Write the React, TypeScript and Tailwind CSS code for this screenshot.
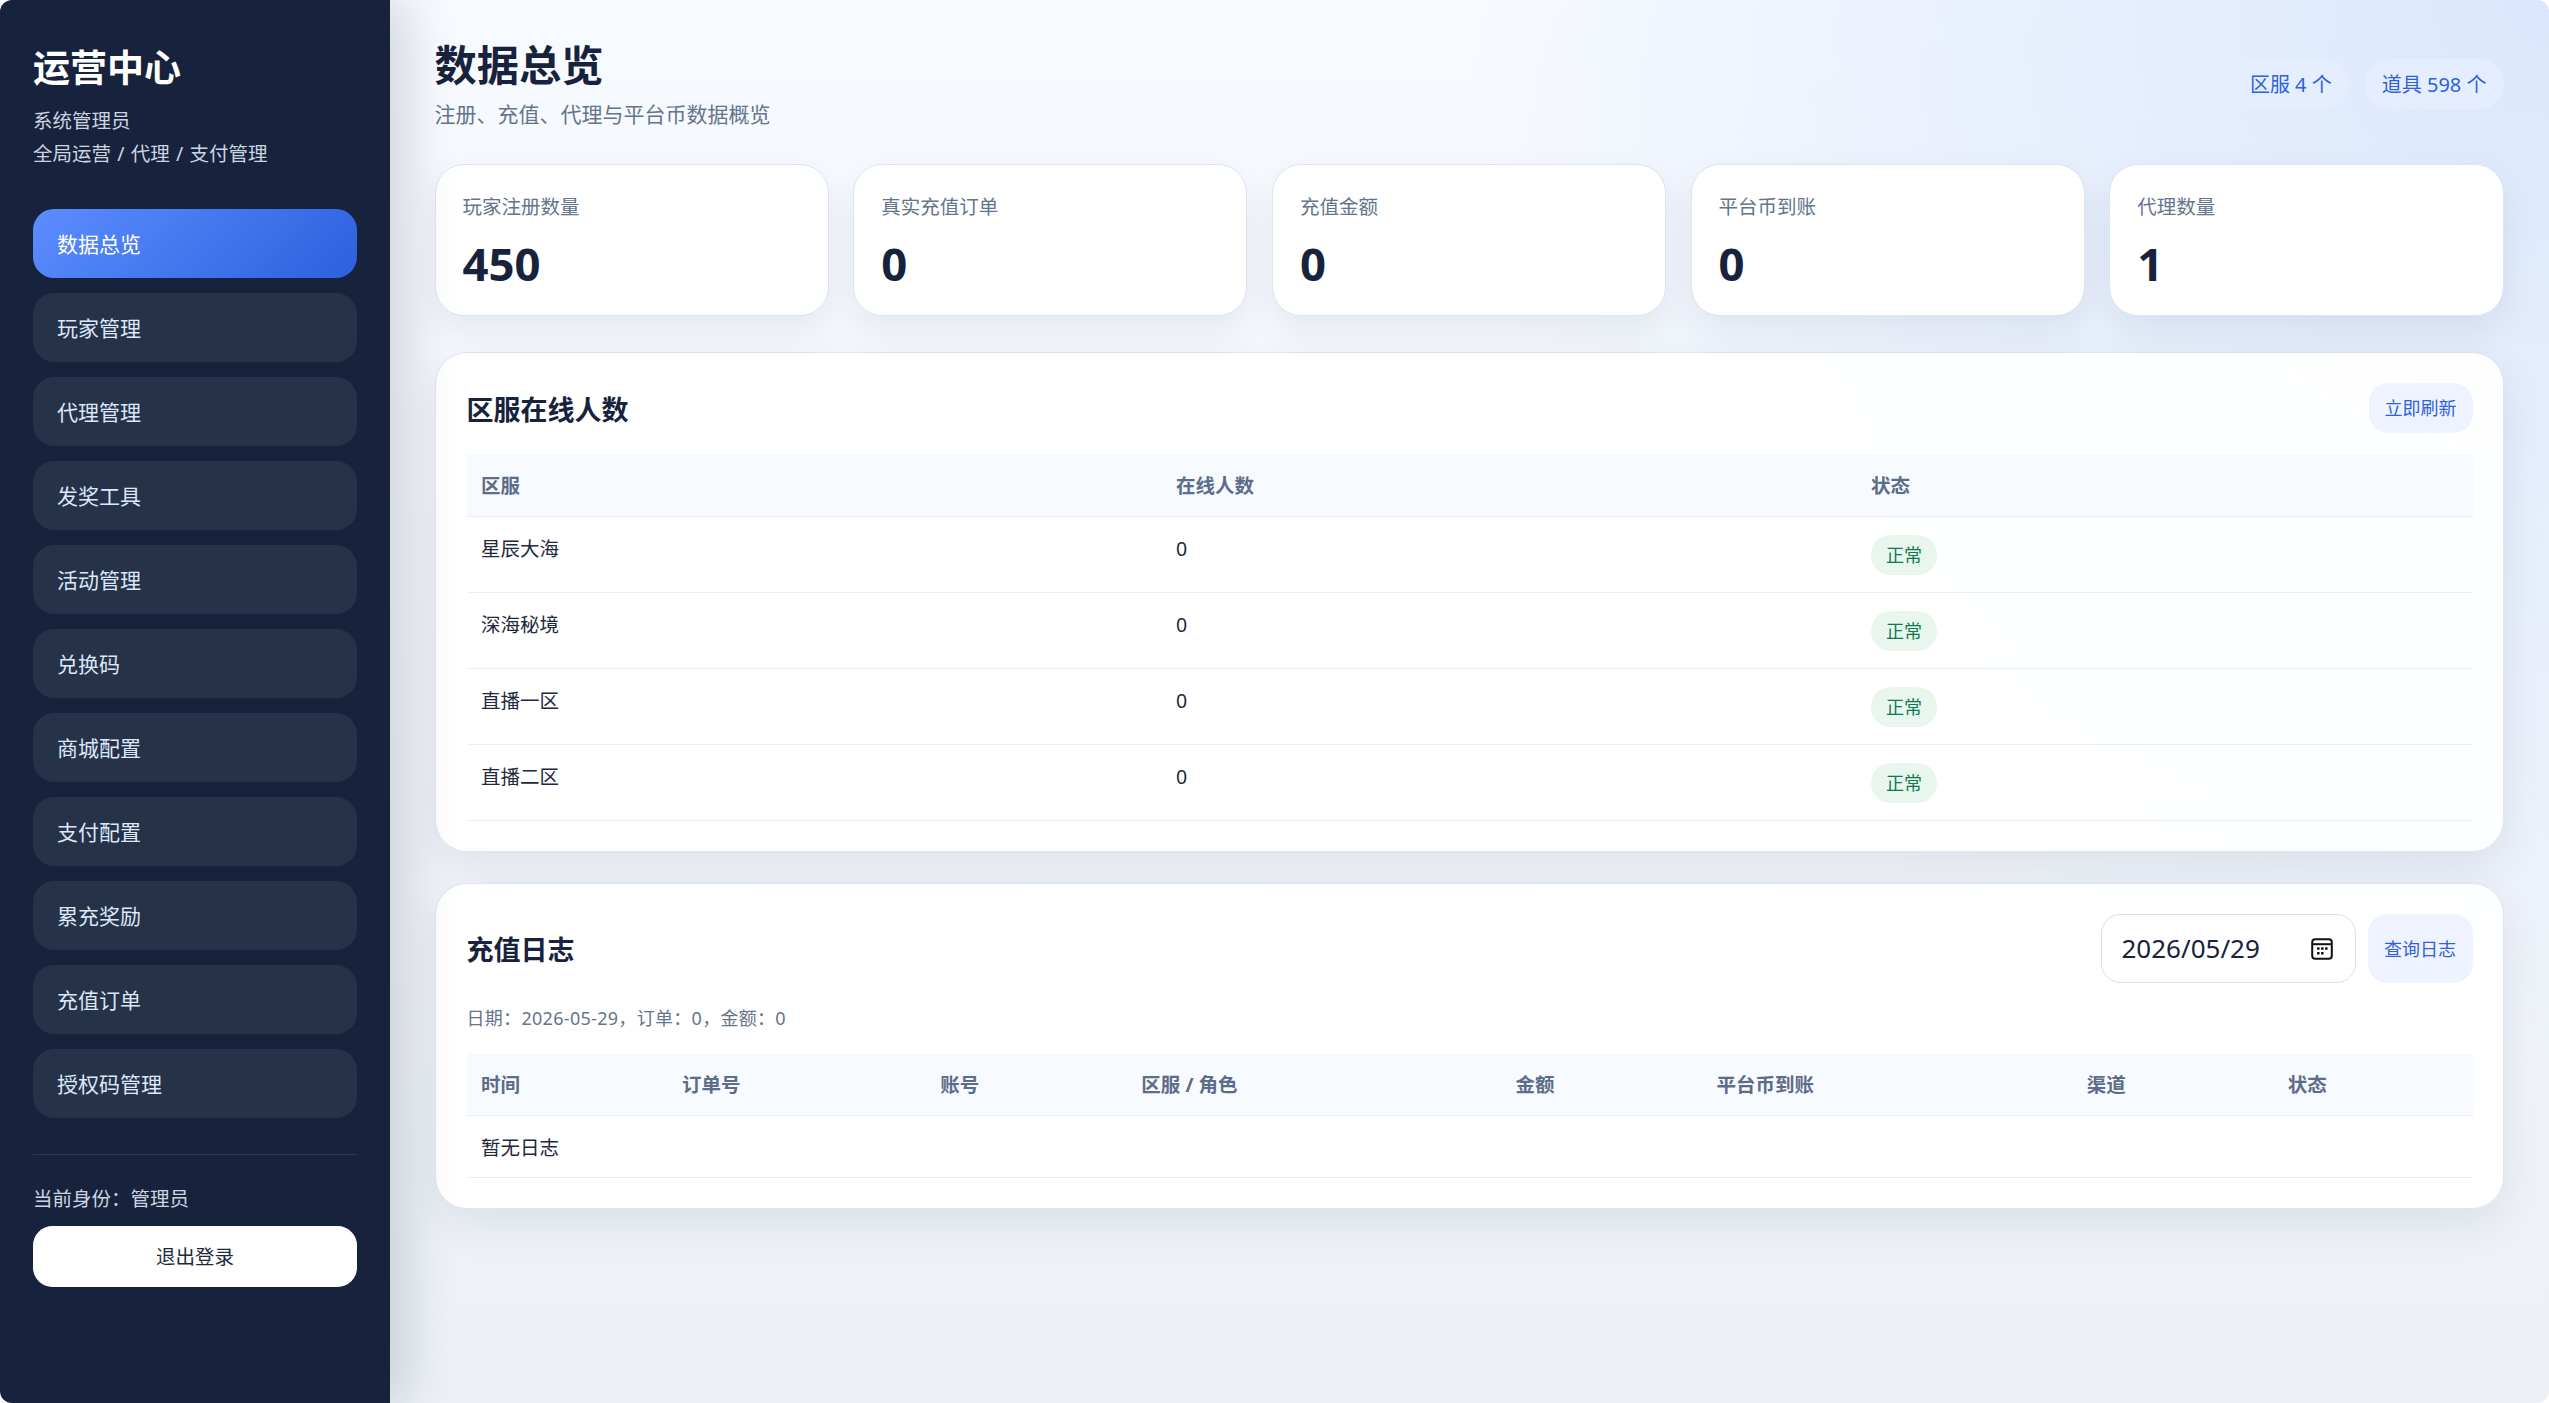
const navItems = ["数据总览", "玩家管理", "代理管理", "发奖工具", "活动管理", "兑换码", "商城配置", "支付配置", "累充奖励", "充值订单", "授权码管理"];

const stats = [
  { label: "玩家注册数量", value: "450" },
  { label: "真实充值订单", value: "0" },
  { label: "充值金额", value: "0" },
  { label: "平台币到账", value: "0" },
  { label: "代理数量", value: "1" },
];

const servers = ["星辰大海", "深海秘境", "直播一区", "直播二区"];

const logColumns = [
  { title: "时间", width: "w-[201px]" },
  { title: "订单号", width: "w-[258px]" },
  { title: "账号", width: "w-[201px]" },
  { title: "区服 / 角色", width: "w-[374px]" },
  { title: "金额", width: "w-[201px]" },
  { title: "平台币到账", width: "w-[370px]" },
  { title: "渠道", width: "w-[201px]" },
  { title: "状态", width: "w-[199px]" },
];

const panelClass =
  "rounded-[32px] border border-[#dbe5f3] bg-white/95 pt-[30px] pr-[30px] pb-[30px] pl-[31px] shadow-[0_16px_44px_rgba(15,23,42,0.08)]";
const thClass = "h-[63px] border-b border-[#e8eef8] bg-[#f7faff] px-[14.5px] pt-[2px] text-left text-[19.5px] font-bold text-[#5d6c88]";
const actionClass = "rounded-[19.5px] bg-[#eef3ff] text-[18px] text-[#2f5fde]";

const CalendarIcon = () => (
  <svg width="22" height="22" viewBox="0 0 22 22" fill="none" className="shrink-0">
    <rect x="1.2" y="1.2" width="19.6" height="19.6" rx="3" stroke="#111" strokeWidth="2" />
    <path d="M1.5 6.2h19" stroke="#111" strokeWidth="2" />
    <g fill="#111">
      <rect x="6" y="9.2" width="2.6" height="2.6" rx="0.6" />
      <rect x="10" y="9.2" width="2.6" height="2.6" rx="0.6" />
      <rect x="14" y="9.2" width="2.6" height="2.6" rx="0.6" />
      <rect x="6" y="14" width="2.6" height="2.6" rx="0.6" />
      <rect x="10" y="14" width="2.6" height="2.6" rx="0.6" />
    </g>
  </svg>
);

export default function App() {
  return (
    <div className="bg-white font-['Noto_Sans','Noto_Sans_CJK_SC',sans-serif]">
      <div className="flex h-[1403px] overflow-hidden rounded-[12px]">
        {/* Sidebar */}
        <aside className="relative z-10 flex w-[390px] shrink-0 flex-col bg-[#17233c] px-[33px] pt-[47px] shadow-[16px_0_48px_rgba(15,23,42,0.16)]">
          <h1 className="text-[37px] leading-[42px] font-bold text-white">运营中心</h1>
          <p className="mt-[15px] text-[19.5px] leading-[33px] [word-spacing:1.2px] text-[#cbd5e1]">
            系统管理员
            <br />
            全局运营 / 代理 / 支付管理
          </p>
          <nav className="mt-[39px] flex flex-col gap-[15.5px]">
            {navItems.map((item, i) => (
              <div
                key={item}
                className={
                  i === 0
                    ? "flex h-[68.5px] items-center rounded-[21px] bg-[linear-gradient(135deg,#5c8dff,#2c60de)] px-[24px] pt-[2px] text-[21px] text-white"
                    : "flex h-[68.5px] items-center rounded-[21px] bg-[#263247] px-[24px] pt-[2px] text-[21px] text-[#dbe7fb]"
                }
              >
                {item}
              </div>
            ))}
          </nav>
          <div className="mt-[36px] border-t border-white/10 pt-[27.5px]">
            <p className="text-[19.5px] leading-[33px] text-[#cbd5e1]">当前身份：管理员</p>
            <button className="mt-[10.5px] h-[61px] w-full rounded-[19.5px] bg-white pt-[2px] text-[19.5px] text-[#1e293b]">退出登录</button>
          </div>
        </aside>

        {/* Main */}
        <main className="flex-1 bg-[radial-gradient(circle_at_top_right,#dae7fc,transparent_42%),linear-gradient(180deg,#f7faff,#edf1f7)] pt-[35px] pr-[45.5px] pl-[44.5px]">
          <header className="flex h-[98px] items-center justify-between">
            <div className="h-[98px]">
              <h2 className="text-[42.25px] leading-[60px] font-bold text-[#17233c]">数据总览</h2>
              <p className="mt-[3px] text-[21px] leading-[33px] text-[#64748b]">注册、充值、代理与平台币数据概览</p>
            </div>
            <div className="flex gap-[16px]">
              <span className="flex h-[50px] items-center rounded-full bg-[#e5eeff] px-[17px] pt-[2px] text-[20px] text-[#2f5fde]">区服 4 个</span>
              <span className="flex h-[50px] items-center rounded-full bg-[#e5eeff] px-[17px] pt-[2px] text-[20px] text-[#2f5fde]">道具 598 个</span>
            </div>
          </header>

          <section className="mt-[30.5px] grid grid-cols-5 gap-[24.5px]">
            {stats.map((s) => (
              <div key={s.label} className="h-[152px] rounded-[29px] border border-[#dbe5f3] bg-white px-[27px] pt-[27px] shadow-[0_14px_36px_rgba(15,23,42,0.07)]">
                <div className="text-[19.5px] leading-[30px] text-[#64748b]">{s.label}</div>
                <div className="mt-[13.5px] text-[45.5px] leading-[56px] font-bold text-[#17233c]">{s.value}</div>
              </div>
            ))}
          </section>

          <section className={`mt-[36px] ${panelClass}`}>
            <div className="flex items-center justify-between">
              <h3 className="pt-[5px] text-[27px] font-bold text-[#17233c]">区服在线人数</h3>
              <button className={`h-[50px] w-[104px] pt-[1px] ${actionClass}`}>立即刷新</button>
            </div>
            <table className="mt-[21px] w-full table-fixed border-collapse">
              <thead>
                <tr>
                  <th className={`w-[695px] ${thClass}`}>区服</th>
                  <th className={`w-[695px] ${thClass}`}>在线人数</th>
                  <th className={thClass}>状态</th>
                </tr>
              </thead>
              <tbody>
                {servers.map((name) => (
                  <tr key={name} className="border-b border-[#e8eef8] text-[19.5px] leading-[30px] text-[#1e293b]">
                    <td className="px-[14.5px] pt-[16.5px] pb-[18.5px] align-top">{name}</td>
                    <td className="px-[14.5px] pt-[16.5px] pb-[18.5px] align-top">0</td>
                    <td className="px-[14.5px] py-[17.5px] align-top">
                      <span className="flex h-[40px] w-[66px] items-center justify-center rounded-full bg-[#e8f6ee] pt-[1px] text-[18px] text-[#0f7a4f]">正常</span>
                    </td>
                  </tr>
                ))}
              </tbody>
            </table>
          </section>

          <section className={`mt-[31px] ${panelClass}`}>
            <div className="flex items-center justify-between">
              <h3 className="pt-[4px] text-[27px] font-bold text-[#17233c]">充值日志</h3>
              <div className="flex gap-[12px]">
                <div className="flex h-[69px] w-[255px] items-center justify-between rounded-[19.5px] border border-[#d6e0ef] bg-white pr-[22px] pl-[20px] text-[26px] text-[#17233c]">
                  2026/05/29
                  <CalendarIcon />
                </div>
                <button className={`h-[69px] w-[105px] pt-[1px] ${actionClass}`}>查询日志</button>
              </div>
            </div>
            <p className="mt-[19.5px] text-[18px] leading-[30px] tracking-[0.3px] text-[#64748b]">日期：2026-05-29，订单：0，金额：0</p>
            <table className="mt-[20px] w-full table-fixed border-collapse">
              <thead>
                <tr>
                  {logColumns.map((c) => (
                    <th key={c.title} className={`${c.width} ${thClass}`}>{c.title}</th>
                  ))}
                </tr>
              </thead>
              <tbody>
                <tr className="border-b border-[#e8eef8]">
                  <td colSpan={8} className="h-[62px] px-[14.5px] pt-[2px] text-[19.5px] text-[#1e293b]">暂无日志</td>
                </tr>
              </tbody>
            </table>
          </section>
        </main>
      </div>
    </div>
  );
}
